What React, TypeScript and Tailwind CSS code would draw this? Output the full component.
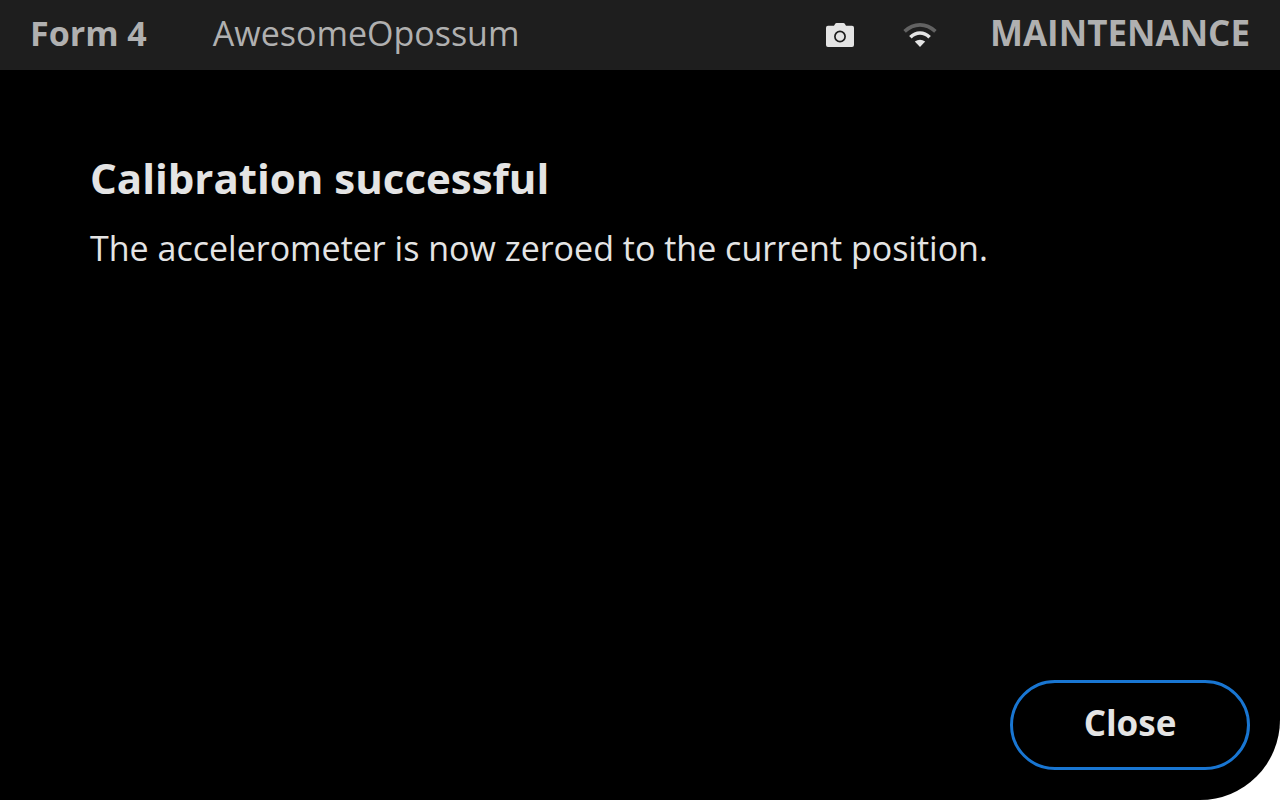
function CameraIcon() {
  return (
    <svg width="28" height="24" viewBox="0 0 28 24" role="img" aria-label="Camera">
      <path
        d="M2 2.8H8L9.2 0.8Q9.7 0 10.6 0H17.4Q18.3 0 18.8 0.8L20 2.8H26Q28 2.8 28 4.8V22Q28 24 26 24H2Q0 24 0 22V4.8Q0 2.8 2 2.8Z"
        fill="#e4e4e4"
      />
      <circle cx="14" cy="13.5" r="5.1" fill="none" stroke="#1e1e1e" strokeWidth="1.7" />
    </svg>
  );
}

function WifiIcon() {
  return (
    <svg width="34" height="24" viewBox="0 0 34 24" role="img" aria-label="Wi-Fi">
      <path d="M1.6 8.4Q8.5 1.9 17 1.9T32.4 8.4" fill="none" stroke="#626262" strokeWidth="3.6" />
      <path d="M7.4 14.2Q11.6 10 17 10T26.6 14.2" fill="none" stroke="#e4e4e4" strokeWidth="3.6" />
      <path d="M11.8 18.6Q17 14.8 22.2 18.6L17 24Z" fill="#e4e4e4" />
    </svg>
  );
}

export default function App() {
  return (
    <div className="flex min-h-screen bg-white pb-px font-['Open_Sans',sans-serif]">
      <div className="flex flex-1 flex-col overflow-hidden rounded-br-[80px] bg-black text-[#e4e4e4]">
        <header className="flex h-[70px] items-center justify-between bg-[#1e1e1e] px-[30px] text-[34px] leading-[40px] text-[#b0b0b0]">
          <div className="flex items-center gap-[66px] pb-1">
            <span className="font-bold">Form 4</span>
            <span>AwesomeOpossum</span>
          </div>
          <div className="flex items-center gap-[53px]">
            <div className="flex items-center gap-[49px]">
              <CameraIcon />
              <WifiIcon />
            </div>
            <span className="pb-1 text-[35px] font-bold">MAINTENANCE</span>
          </div>
        </header>
        <main className="flex-1 px-[90px] pt-[83px]">
          <h1 className="text-[42px] leading-[50px] font-bold">Calibration successful</h1>
          <p className="mt-5 text-[34px] leading-[50px]">
            The accelerometer is now zeroed to the current position.
          </p>
        </main>
        <footer className="flex justify-end p-[30px]">
          <button
            type="button"
            className="h-[90px] w-[240px] rounded-full border-3 border-[#1976d2] pb-1 text-[35px] font-bold"
          >
            Close
          </button>
        </footer>
      </div>
    </div>
  );
}
